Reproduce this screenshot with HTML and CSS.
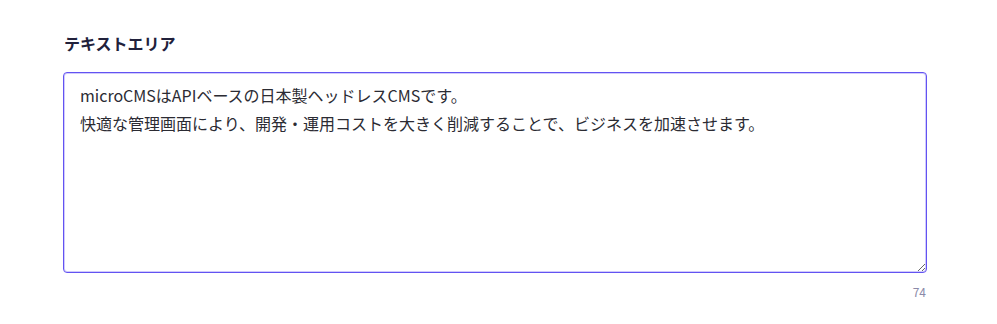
FILE: index.html
```html
<!DOCTYPE html>
<html lang="ja">
<head>
<meta charset="utf-8">
<link rel="stylesheet" href="styles.css">
</head>
<body>
<div class="field">
  <label class="label" for="ta">テキストエリア</label>
  <textarea id="ta" class="textarea">microCMSはAPIベースの日本製ヘッドレスCMSです。
快適な管理画面により、開発・運用コストを大きく削減することで、ビジネスを加速させます。</textarea>
  <div class="counter">74</div>
</div>
</body>
</html>
```

FILE: styles.css
```css
html, body {
  margin: 0;
  padding: 0;
  background: #fff;
}
body {
  font-family: "Noto Sans CJK JP", "Noto Sans", sans-serif;
}
.field {
  display: flex;
  flex-direction: column;
  padding: 31px 70px 0 63px;
  width: 864px;
}
.label {
  font-size: 16px;
  font-weight: bold;
  color: #21213b;
  line-height: 24px;
  padding-left: 1px;
  margin-bottom: 17px;
}
.textarea {
  box-sizing: border-box;
  width: 864px;
  height: 201px;
  border: 1px solid #6353f2;
  border-radius: 4px;
  box-shadow: inset 0 0 0 1px rgba(99, 83, 242, 0.3);
  padding: 8px 16px;
  font-family: "Noto Sans CJK JP", "Noto Sans", sans-serif;
  font-size: 16px;
  line-height: 28px;
  color: #2b2b33;
  outline: none;
  resize: vertical;
}
.counter {
  text-align: right;
  font-size: 12px;
  color: #8b8aa8;
  margin-top: 10px;
  padding-right: 1px;
}
```
